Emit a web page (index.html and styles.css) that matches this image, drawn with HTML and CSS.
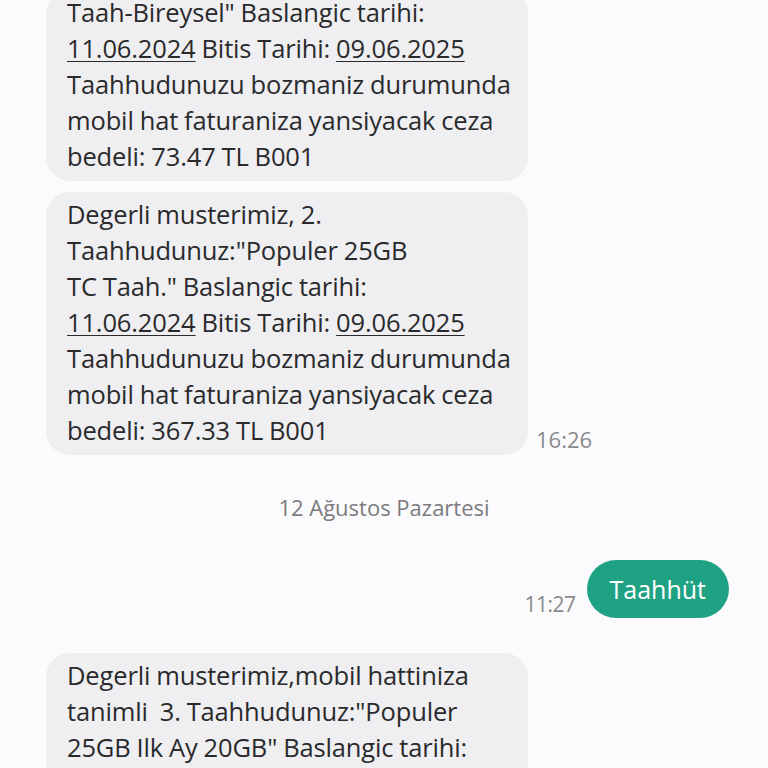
FILE: index.html
```html
<!DOCTYPE html>
<html lang="tr">
<head>
<meta charset="utf-8">
<link rel="stylesheet" href="styles.css">
</head>
<body>
<div class="chat">
  <div class="row in first">
    <div class="bubble">Taah-Bireysel" Baslangic tarihi:<br><span class="u">11.06.2024</span> Bitis Tarihi: <span class="u">09.06.2025</span><br>Taahhudunuzu bozmaniz durumunda<br>mobil hat faturaniza yansiyacak ceza<br>bedeli: 73.47 TL B001</div>
  </div>
  <div class="row in">
    <div class="bubble">Degerli musterimiz, 2.<br>Taahhudunuz:"Populer 25GB<br>TC Taah." Baslangic tarihi:<br><span class="u">11.06.2024</span> Bitis Tarihi: <span class="u">09.06.2025</span><br>Taahhudunuzu bozmaniz durumunda<br>mobil hat faturaniza yansiyacak ceza<br>bedeli: 367.33 TL B001</div>
    <span class="time">16:26</span>
  </div>
  <div class="date">12 Ağustos Pazartesi</div>
  <div class="row out">
    <span class="time">11:27</span>
    <div class="sent">Taahhüt</div>
  </div>
  <div class="row in last">
    <div class="bubble">Degerli musterimiz,mobil hattiniza<br>tanimli&nbsp; 3. Taahhudunuz:"Populer<br>25GB Ilk Ay 20GB" Baslangic tarihi:<br>11.06.2024 Bitis Tarihi: 09.06.2025</div>
  </div>
</div>
</body>
</html>
```

FILE: styles.css
```css
html, body {
  margin: 0;
  padding: 0;
  background: #fbfbfd;
  height: 768px;
  overflow: hidden;
}
.chat {
  font-family: "Open Sans", "Liberation Sans", sans-serif;
  color: #2a2a2c;
  display: flex;
  flex-direction: column;
  padding-left: 46px;
  margin-top: -10px;
}
.row {
  display: flex;
  align-items: flex-end;
}
.row.in + .row.in {
  margin-top: 11px;
}
.bubble {
  width: 482px;
  box-sizing: border-box;
  background: #efeff1;
  border-radius: 24px;
  padding: 4px 14px 7px 21px;
  font-size: 25.5px;
  font-weight: 500;
  line-height: 36px;
  white-space: nowrap;
  letter-spacing: -0.15px;
  word-spacing: -0.5px;
}
.u {
  text-decoration: underline;
  text-underline-offset: 3px;
  text-decoration-thickness: 1px;
}
.time {
  font-size: 22px;
  color: #8a8a8c;
  line-height: 24px;
  margin-left: 8px;
  margin-bottom: 4px;
}
.date {
  margin-top: 40px;
  margin-left: -46px;
  text-align: center;
  font-size: 22px;
  line-height: 24px;
  color: #7b7b7d;
}
.row.out {
  margin-top: 41px;
  justify-content: flex-end;
  padding-right: 39px;
}
.row.out .time {
  margin-left: 0;
  margin-right: 11px;
  margin-bottom: 2px;
  font-size: 21px;
  letter-spacing: -0.5px;
}
.sent {
  background: #1fa283;
  color: #ffffff;
  font-size: 25px;
  line-height: 58px;
  height: 58px;
  padding: 0 23px;
  border-radius: 29px;
}
.row.last {
  margin-top: 35px;
}
```
